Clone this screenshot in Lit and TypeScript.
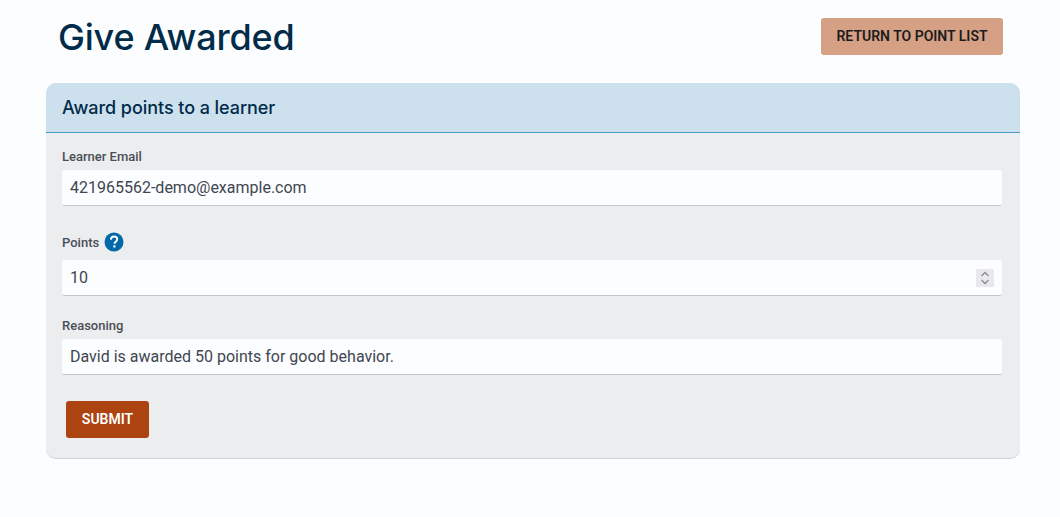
import { LitElement, html, css } from 'lit';
import { customElement } from 'lit/decorators.js';

@customElement('app-root')
export class AppRoot extends LitElement {
  static styles = css`
    :host {
      display: block;
      min-height: 517px;
      background: #fcfdff;
      font-family: Roboto, sans-serif;
      color: #3f4650;
      box-sizing: border-box;
      padding: 0 40px 0 46px;
    }

    .top {
      display: flex;
      align-items: flex-start;
      justify-content: space-between;
      height: 83px;
      padding: 17px 17px 0 12px;
      box-sizing: border-box;
    }

    h1 {
      margin: 0;
      font-family: Inter, sans-serif;
      font-size: 36px;
      line-height: 40px;
      font-weight: 500;
      letter-spacing: -0.2px;
      color: #002b49;
    }

    button {
      font-family: Roboto, sans-serif;
      font-size: 14px;
      font-weight: 600;
      line-height: 17px;
      height: 37px;
      padding: 0;
      border: none;
      border-radius: 3px;
      white-space: nowrap;
    }

    .back {
      margin-top: 1px;
      width: 182px;
      background: #d5a083;
      color: #1b1b1f;
    }

    .card {
      background: #ecedef;
      border-radius: 10px;
      border-bottom: 1px solid #cfd0d2;
      height: 376px;
      box-sizing: border-box;
      overflow: hidden;
    }

    .card-head {
      height: 50px;
      box-sizing: border-box;
      background: #cde0ee;
      border-bottom: 1px solid #4b9bc9;
      padding: 0 16px 1px;
      display: flex;
      align-items: center;
      font-family: Inter, sans-serif;
      font-size: 18px;
      font-weight: 500;
      letter-spacing: -0.06px;
      color: #002b49;
    }

    form {
      display: flex;
      flex-direction: column;
      padding: 17px 18px 0 16px;
    }

    label {
      display: flex;
      align-items: center;
      gap: 5px;
      font-size: 13px;
      font-weight: 500;
      line-height: 14px;
      color: #4a4f57;
    }

    input {
      display: block;
      width: 100%;
      box-sizing: border-box;
      margin: 6px 0 0;
      padding: 0 8px;
      border: none;
      border-bottom: 1px solid #c4c5c7;
      border-radius: 3px;
      background: #fcfdff;
      font-family: Roboto, sans-serif;
      font-size: 16px;
      color: #3f4650;
      outline: none;
    }

    input::-webkit-inner-spin-button {
      display: none;
    }

    .email {
      height: 36px;
      margin-bottom: 27px;
    }

    .points-label {
      height: 20px;
    }

    .points-label svg {
      margin-top: -2px;
    }

    .number-wrap {
      position: relative;
      margin-bottom: 23px;
    }

    .points {
      height: 36px;
      margin-top: 7px;
    }

    .spinner {
      position: absolute;
      right: 8px;
      top: 16px;
      width: 18px;
      height: 18px;
      background: #e8e8ed;
    }

    .reason {
      height: 36px;
    }

    svg {
      display: block;
    }

    .submit {
      align-self: flex-start;
      width: 83px;
      margin: 26px 0 0 4px;
      background: #ad4310;
      color: #fff;
    }
  `;

  render() {
    return html`
      <div class="top">
        <h1>Give Awarded</h1>
        <button class="back" type="button">RETURN TO POINT LIST</button>
      </div>
      <section class="card">
        <div class="card-head">Award points to a learner</div>
        <form>
          <label for="email">Learner Email</label>
          <input id="email" class="email" type="text" value="421965562-demo@example.com" />
          <label class="points-label" for="points">
            Points
            <svg width="20" height="20" viewBox="0 0 20 20" aria-hidden="true">
              <circle cx="10" cy="10" r="9.5" fill="#0067a8"></circle>
              <path
                d="M6.9 7.6c.1-1.900 1.400-3 3.200-3 1.800 0 3.100 1.100 3.100 2.700 0 1.200-.6 1.900-1.600 2.600-.9.6-1.100 1-1.100 1.900"
                fill="none"
                stroke="#fff"
                stroke-width="2"
              ></path>
              <rect x="9.300" y="13.300" width="2.200" height="2.200" fill="#fff"></rect>
            </svg>
          </label>
          <div class="number-wrap">
            <input id="points" class="points" type="number" value="10" />
            <div class="spinner">
              <svg width="18" height="18" viewBox="0 0 18 18" aria-hidden="true">
                <path
                  d="M5.500 7 9 3.500 12.500 7M5.500 11 9 14.500 12.500 11"
                  fill="none"
                  stroke="#8b8b97"
                  stroke-width="1.300"
                ></path>
              </svg>
            </div>
          </div>
          <label for="reason">Reasoning</label>
          <input
            id="reason"
            class="reason"
            type="text"
            value="David is awarded 50 points for good behavior."
          />
          <button class="submit" type="button">SUBMIT</button>
        </form>
      </section>
    `;
  }
}
